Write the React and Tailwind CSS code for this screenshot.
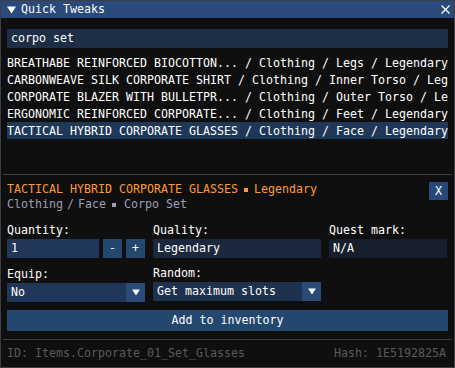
import React from "react";

const rows = [
  "BREATHABE REINFORCED BIOCOTTON... / Clothing / Legs / Legendary",
  "CARBONWEAVE SILK CORPORATE SHIRT / Clothing / Inner Torso / Legendary",
  "CORPORATE BLAZER WITH BULLETPR... / Clothing / Outer Torso / Legendary",
  "ERGONOMIC REINFORCED CORPORATE... / Clothing / Feet / Legendary",
  "TACTICAL HYBRID CORPORATE GLASSES / Clothing / Face / Legendary",
];

const DownArrow = ({ w = 9, h = 8 }) => (
  <svg width={w} height={h} viewBox="0 0 9 8">
    <path d="M0 0.5H9L4.5 7.5Z" fill="#ffffff" />
  </svg>
);

const Bullet = ({ className }) => (
  <span className={"inline-block w-[4px] h-[4px] shrink-0 " + className} />
);

export default function App() {
  return (
    <div className="w-[455px] h-[368px] bg-[#0f0f0f] border border-[#3e3e47] flex flex-col font-['DejaVu_Sans_Mono',monospace] text-[11.63px] text-white overflow-hidden">
      {/* title bar */}
      <div className="h-[17px] bg-[#294a7a] flex items-center shrink-0">
        <span className="ml-[6px] flex">
          <DownArrow w={9} h={8} />
        </span>
        <span className="ml-[5px] leading-[17px]">Quick Tweaks</span>
        <svg className="ml-auto mr-[4px]" width="9" height="9" viewBox="0 0 9 9">
          <path d="M0.5 0.5L8.5 8.5M8.5 0.5L0.5 8.5" stroke="#ffffff" strokeWidth="1.3" />
        </svg>
      </div>

      {/* search + list */}
      <div className="px-[6px] flex flex-col">
        <div className="mt-[11px] h-[19px] bg-[#1e2e47] flex items-center pl-[4px] leading-[19px]">
          corpo set
        </div>
        <div className="mt-[6px] flex flex-col">
          {rows.map((r, i) => (
            <div
              key={i}
              className={
                "h-[17px] leading-[19px] whitespace-pre overflow-hidden " +
                (i === 4 ? "bg-[#1f3858]" : "")
              }
            >
              {r}
            </div>
          ))}
        </div>
      </div>

      <div className="mt-[35px] mx-[2px] h-[1px] bg-[#3e3e47] shrink-0" />

      {/* detail */}
      <div className="px-[6px] flex flex-col">
        <div className="mt-[7px] flex justify-between items-start">
          <div className="flex flex-col">
            <div className="h-[15px] leading-[15px] text-[#ff9933] flex items-center whitespace-pre">
              <span>TACTICAL HYBRID CORPORATE GLASSES</span>
              <Bullet className="ml-[6px] bg-[#ff9933]" />
              <span className="ml-[6px]">Legendary</span>
            </div>
            <div className="h-[15px] leading-[15px] text-[#9e9eb8] flex items-center whitespace-pre">
              <span>Clothing</span>
              <span className="ml-[4px]">/</span>
              <span className="ml-[4px]">Face</span>
              <Bullet className="ml-[6px] bg-[#9e9eb8]" />
              <span className="ml-[8px]">Corpo Set</span>
            </div>
          </div>
          <div className="w-[19px] h-[18px] bg-[#27497a] flex items-center justify-center leading-[18px]">
            X
          </div>
        </div>

        <div className="mt-[11px] flex gap-[8px] items-start">
          <div className="w-[138px] flex flex-col">
            <div className="h-[16px] leading-[14px]">Quantity:</div>
            <div className="flex gap-[4px] h-[19px]">
              <div className="w-[92px] bg-[#20365a] pl-[4px] flex items-center">1</div>
              <div className="w-[19px] bg-[#24476e] flex items-center justify-center">-</div>
              <div className="w-[19px] bg-[#24476e] flex items-center justify-center">+</div>
            </div>
            <div className="mt-[9px] h-[16px] leading-[14px]">Equip:</div>
            <div className="flex h-[19px]">
              <div className="flex-1 bg-[#20365a] pl-[4px] flex items-center">No</div>
              <div className="w-[19px] bg-[#284b78] flex items-center justify-center">
                <DownArrow w={8} h={7} />
              </div>
            </div>
          </div>

          <div className="w-[168px] flex flex-col">
            <div className="h-[16px] leading-[14px]">Quality:</div>
            <div className="h-[19px] bg-[#1b283d] pl-[4px] flex items-center">Legendary</div>
            <div className="mt-[8px] h-[16px] leading-[14px]">Random:</div>
            <div className="flex h-[19px]">
              <div className="flex-1 bg-[#1e3250] pl-[4px] flex items-center">Get maximum slots</div>
              <div className="w-[19px] bg-[#284b78] flex items-center justify-center">
                <DownArrow w={8} h={7} />
              </div>
            </div>
          </div>

          <div className="w-[118px] flex flex-col">
            <div className="h-[16px] leading-[14px]">Quest mark:</div>
            <div className="h-[19px] bg-[#171f2d] pl-[4px] flex items-center">N/A</div>
          </div>
        </div>

        <div className="mt-[8px] h-[21px] bg-[#24476e] flex items-center justify-center">
          Add to inventory
        </div>
      </div>

      <div className="mt-[8px] mx-[2px] h-[1px] bg-[#3e3e47] shrink-0" />

      <div className="mt-[6px] h-[14px] leading-[14px] pl-[6px] pr-[8px] flex justify-between text-[#5a5a5a] whitespace-pre">
        <span>ID: Items.Corporate_01_Set_Glasses</span>
        <span>Hash: 1E5192825A</span>
      </div>
    </div>
  );
}
